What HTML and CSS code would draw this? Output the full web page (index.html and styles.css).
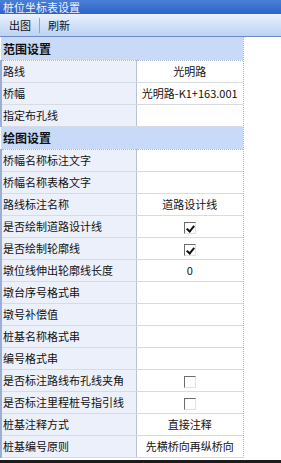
FILE: index.html
```html
<!DOCTYPE html>
<html lang="zh-CN">
<head>
    <meta charset="UTF-8">
    <title>桩位坐标表设置</title>
    <link rel="stylesheet" href="styles.css">
</head>
<body>

<!-- Title bar -->
<div class="titlebar">桩位坐标表设置</div>

<!-- Toolbar -->
<div class="toolbar">
    <span class="tool">出图</span>
    <span class="sep"></span>
    <span class="tool">刷新</span>
</div>

<!-- Property grid -->
<div class="grid-wrap">
    <table class="grid">
        <colgroup>
            <col class="col-label">
            <col class="col-value">
        </colgroup>
        <tr class="section"><td colspan="2">范围设置</td></tr>
        <tr><td class="label">路线</td><td class="value">光明路</td></tr>
        <tr><td class="label">桥幅</td><td class="value">光明路-K1+163.001</td></tr>
        <tr><td class="label">指定布孔线</td><td class="value"></td></tr>

        <tr class="section"><td colspan="2">绘图设置</td></tr>
        <tr><td class="label">桥幅名称标注文字</td><td class="value"></td></tr>
        <tr><td class="label">桥幅名称表格文字</td><td class="value"></td></tr>
        <tr><td class="label">路线标注名称</td><td class="value">道路设计线</td></tr>
        <tr><td class="label">是否绘制道路设计线</td><td class="value"><span class="check on"></span></td></tr>
        <tr><td class="label">是否绘制轮廓线</td><td class="value"><span class="check on"></span></td></tr>
        <tr><td class="label">墩位线伸出轮廓线长度</td><td class="value">0</td></tr>
        <tr><td class="label">墩台序号格式串</td><td class="value"></td></tr>
        <tr><td class="label">墩号补偿值</td><td class="value"></td></tr>
        <tr><td class="label">桩基名称格式串</td><td class="value"></td></tr>
        <tr><td class="label">编号格式串</td><td class="value"></td></tr>
        <tr><td class="label">是否标注路线布孔线夹角</td><td class="value"><span class="check"></span></td></tr>
        <tr><td class="label">是否标注里程桩号指引线</td><td class="value"><span class="check"></span></td></tr>
        <tr><td class="label">桩基注释方式</td><td class="value">直接注释</td></tr>
        <tr><td class="label">桩基编号原则</td><td class="value">先横桥向再纵桥向</td></tr>
    </table>
</div>

<div class="bottom-bar"></div>

</body>
</html>
```

FILE: styles.css
```css
/* Base */
* {
    margin: 0;
    padding: 0;
    box-sizing: border-box;
}

body {
    width: 281px;
    height: 463px;
    overflow: hidden;
    background: #ffffff;
    font-family: "Noto Sans CJK SC", "DejaVu Sans", sans-serif;
    font-size: 11px;
    color: #111;
    display: flex;
    flex-direction: column;
}

/* Title bar */
.titlebar {
    height: 14px;
    line-height: 14px;
    padding-left: 3px;
    background: linear-gradient(to bottom, #4a7fd8, #2d63c8);
    color: #eef3ff;
    font-size: 11px;
}

/* Toolbar */
.toolbar {
    height: 23px;
    display: flex;
    align-items: center;
    padding-left: 6px;
    background: linear-gradient(to bottom, #eaf1fd, #c9dbf6 70%, #bed2f2);
    border-bottom: 1px solid #6d8cc4;
}

.tool {
    font-size: 11px;
    color: #111;
    padding: 0 3px;
}

.sep {
    width: 1px;
    height: 15px;
    background: #8fa5c8;
    margin: 0 5px;
}

/* Grid */
.grid-wrap {
    width: 244px;
    border-right: 1px dotted #a9b4c6;
}

.grid {
    width: 100%;
    border-collapse: collapse;
    table-layout: fixed;
}

.col-label {
    width: 135px;
}

.grid td {
    height: 22px;
    white-space: nowrap;
    overflow: hidden;
    font-size: 11px;
    padding: 0;
    border-bottom: 1px solid #d7dbe4;
}

.grid tr.section td {
    background: #c8daf7;
    font-weight: bold;
    font-size: 12px;
    padding-left: 2px;
    height: 23px;
    border-bottom: 1px dotted #a7b8d6;
}

.grid td.label {
    background: #ecf0fa;
    border-left: 2px solid #9db0d4;
    border-right: 1px solid #b9c2d2;
    padding-left: 1px;
}

.grid td.value {
    background: #ffffff;
    text-align: center;
}

/* Checkboxes */
.check {
    display: inline-block;
    width: 12px;
    height: 12px;
    vertical-align: middle;
    border-top: 1px solid #6c6c6c;
    border-left: 1px solid #6c6c6c;
    border-right: 1px solid #e3e3e3;
    border-bottom: 1px solid #e3e3e3;
    background: #ffffff;
    position: relative;
}

.check.on::after {
    content: "";
    position: absolute;
    left: 3px;
    top: 1px;
    width: 3px;
    height: 6px;
    border-right: 2px solid #111;
    border-bottom: 2px solid #111;
    transform: rotate(40deg);
}

.bottom-bar {
    flex: 1;
    background: linear-gradient(to bottom, #ffffff 0, #ffffff 2px, #1c1c1c 2px);
}
```
